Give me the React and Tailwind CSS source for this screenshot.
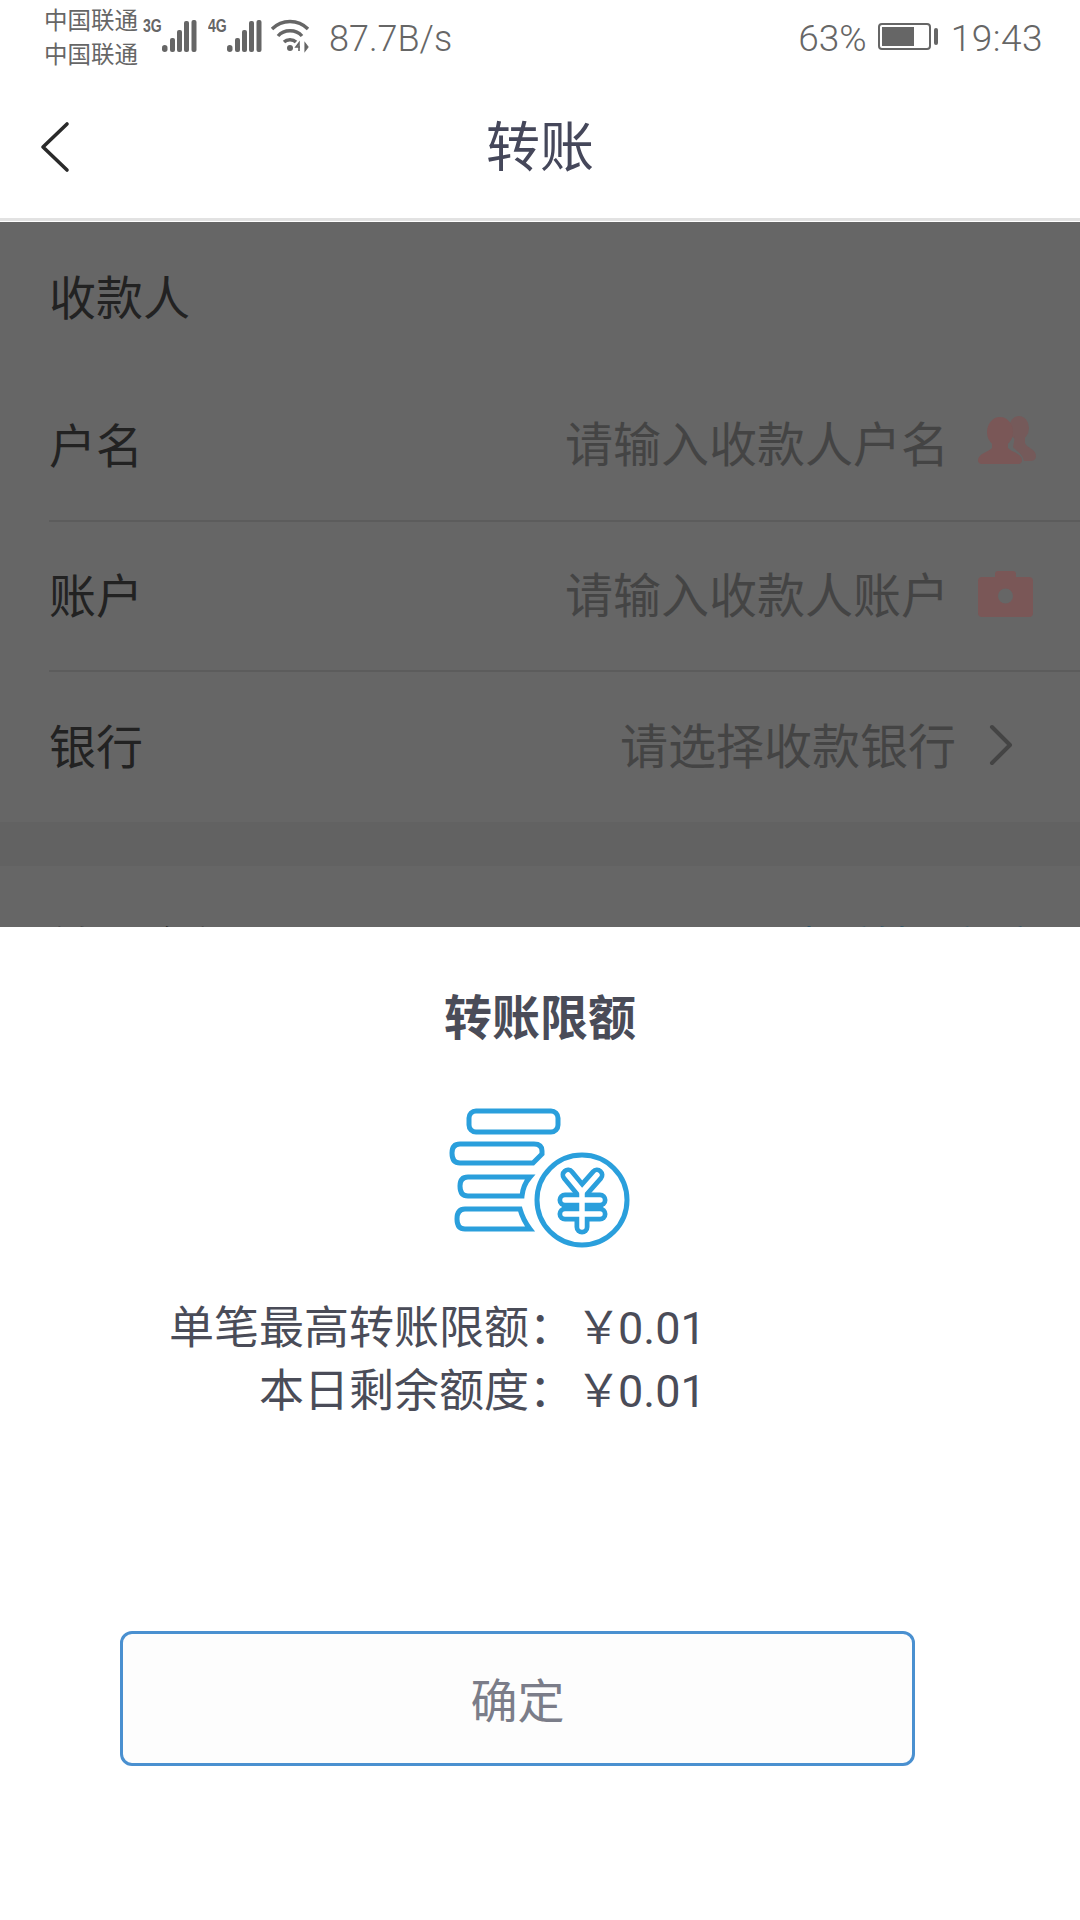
import React from 'react';

const font = { fontFamily: '"Noto Sans CJK SC", sans-serif' };
const digits = { fontFamily: 'Roboto, sans-serif', fontWeight: 300 };
const badge = { fontFamily: '"Liberation Sans", sans-serif' };

function SignalBars() {
    return (
        <svg width="36" height="32" viewBox="0 0 36 32" fill="#666666">
            <rect x="0" y="25" width="5.5" height="7" rx="2.75" />
            <rect x="8" y="18" width="5" height="14" rx="2" />
            <rect x="15" y="10" width="5" height="22" rx="2" />
            <rect x="22" y="1" width="5" height="31" rx="2" />
            <rect x="29.5" y="0" width="5" height="32" rx="2" />
        </svg>
    );
}

function Wifi() {
    return (
        <svg width="40" height="34" viewBox="0 0 40 34" fill="none" stroke="#666666" strokeWidth="3.4">
            <path d="M2 10 C12 0 28 0 38 10" />
            <path d="M8 17 C14 10 26 10 32 17" />
            <path d="M14 23 C17 20 23 20 26 23" />
            <circle cx="20" cy="29" r="3" fill="#666666" stroke="none" />
            <path d="M29 32 V24 L26 28 H30" strokeWidth="1.6" />
            <path d="M35 24 V32 L38 28 Z" strokeWidth="1.2" fill="#666666" />
        </svg>
    );
}

function Coins() {
    const blue = "#2a9fdc";
    return (
        <svg width="220" height="170" viewBox="0 0 220 170" fill="none" stroke={blue} strokeWidth="5">
            <rect x="39" y="21" width="89" height="21" rx="7" />
            <path d="M30 54 H104 Q112 54 112 61 V64 L103 73 H30 Q22 73 22 63 Q22 54 30 54 Z" />
            <path d="M100 87 H38 Q30 87 30 96 Q30 106 38 106 H92 Q93 95 100 87 Z" />
            <path d="M90 119 H35 Q27 119 27 129 Q27 139 35 139 H100 Q93 130 90 119 Z" />
            <circle cx="152" cy="110" r="45" />
            <g strokeLinecap="round" strokeLinejoin="round" strokeWidth="15">
                <path d="M138 85 L152 102 L167 85" />
                <path d="M152 102 V137" />
                <path d="M135 110 H170" />
                <path d="M135 124 H170" />
            </g>
            <g stroke="#ffffff" strokeLinecap="round" strokeLinejoin="round" strokeWidth="5.5">
                <path d="M138 85 L152 102 L167 85" />
                <path d="M152 102 V137" />
                <path d="M135 110 H170" />
                <path d="M135 124 H170" />
            </g>
        </svg>
    );
}

function FormRow({ label, placeholder, icon, border, height = "h-[150px]" }) {
    return (
        <div className={`ml-[49px] ${height} pb-[5px] flex items-center justify-between ${border ? "border-b-2 border-[#5c5c5c]" : ""}`}>
            <span className="text-[47px] text-[#222222]">{label}</span>
            <div className="flex items-center">
                <span className="text-[48px] mt-[-4px] text-[#444444]">{placeholder}</span>
                {icon}
            </div>
        </div>
    );
}

export default function App() {
    return (
        <div className="w-[1080px] h-[1920px] flex flex-col overflow-hidden bg-white" style={font}>
            {/* Status bar */}
            <div className="h-[74px] pl-[44px] pr-[37px] flex items-start justify-between text-[#666666]">
                <div className="flex items-start">
                    <div className="w-[98px] pt-[2px] text-[23.5px] leading-[34px]">
                        <div>中国联通</div>
                        <div>中国联通</div>
                    </div>
                    <span className="w-[19px] mt-[17px] ml-[1px] text-[18px] leading-[18px] font-bold scale-x-[0.78] origin-left whitespace-nowrap" style={badge}>3G</span>
                    <div className="mt-[20px]"><SignalBars /></div>
                    <span className="w-[19px] mt-[17px] ml-[10px] text-[18px] leading-[18px] font-bold scale-x-[0.78] origin-left whitespace-nowrap" style={badge}>4G</span>
                    <div className="mt-[20px]"><SignalBars /></div>
                    <div className="mt-[19px] ml-[7px]"><Wifi /></div>
                    <span className="mt-[17px] ml-[19px] text-[36px] leading-[44px]" style={digits}>87.7B/s</span>
                </div>
                <div className="flex items-start">
                    <span className="mt-[17px] text-[37px] leading-[44px]" style={digits}>63%</span>
                    <div className="mt-[23px] ml-[11px] w-[53px] h-[27px] border-2 border-[#666666] rounded-[4px] p-[2px]">
                        <div className="w-[32px] h-full bg-[#666666]"></div>
                    </div>
                    <div className="mt-[28px] ml-[3px] w-[4px] h-[17px] bg-[#666666] rounded-[2px]"></div>
                    <span className="mt-[17px] ml-[13px] text-[37px] leading-[44px] tracking-[0.5px]" style={digits}>19:43</span>
                </div>
            </div>

            {/* Header */}
            <div className="relative h-[144px] flex items-center justify-center">
                <svg className="absolute left-[38px] top-[46px]" width="34" height="54" viewBox="0 0 34 54" fill="none" stroke="#2a2a2a" strokeWidth="3.6" strokeLinecap="round" strokeLinejoin="round">
                    <path d="M29 4 L5 27 L29 50" />
                </svg>
                <span className="text-[54px] leading-[60px] text-[#45475a] mt-[-4px]">转账</span>
            </div>
            <div className="h-[3px] bg-[#e2e2e2]"></div>
            <div className="h-[1px] bg-white"></div>

            {/* Dimmed form */}
            <div className="h-[705px] overflow-hidden bg-[#666666]">
                <div className="h-[149px] pl-[49px] pb-[3px] flex items-center">
                    <span className="text-[47px] text-[#222222]">收款人</span>
                </div>
                <FormRow
                    label="户名"
                    placeholder="请输入收款人户名"
                    border
                    height="h-[151px]"
                    icon={
                        <svg className="ml-[29px] mr-[44px] mt-[-6px]" width="58" height="48" viewBox="0 0 58 48">
                            <ellipse cx="41" cy="12" rx="10" ry="12" fill="#755a5a" />
                            <path d="M37 20 H47 V27 C49 32 58 33 58 40 C58 44 55 45 52 45 H46 C45 38 38 35 35 31 Z" fill="#755a5a" />
                            <ellipse cx="22" cy="16" rx="13" ry="15" fill="#7a5757" />
                            <path d="M14 26 V32 C10 36 0 38 0 44 Q0 48 4 48 H40 Q44 48 44 44 C44 38 34 36 30 32 V26 Z" fill="#7a5757" />
                        </svg>
                    }
                />
                <FormRow
                    label="账户"
                    placeholder="请输入收款人账户"
                    border
                    icon={
                        <svg className="ml-[29px] mr-[47px]" width="55" height="46" viewBox="0 0 55 46" fill="#7a5757">
                            <path d="M17 6 V3 Q17 0 20 0 H35 Q38 0 38 3 V6 H51 Q55 6 55 10 V42 Q55 46 51 46 H4 Q0 46 0 42 V10 Q0 6 4 6 Z" />
                            <circle cx="27.5" cy="25" r="7.5" fill="#666666" />
                        </svg>
                    }
                />
                <FormRow
                    label="银行"
                    placeholder="请选择收款银行"
                    icon={
                        <svg className="ml-[32px] mr-[66px]" width="26" height="42" viewBox="0 0 26 42" fill="none" stroke="#444444" strokeWidth="4" strokeLinecap="round" strokeLinejoin="round">
                            <path d="M4 3 L22 21 L4 39" />
                        </svg>
                    }
                />
                <div className="h-[44px] bg-[#626262]"></div>
                <div className="h-[150px] pl-[49px] pr-[40px] pt-[10px] flex items-center justify-between">
                    <span className="text-[47px] text-[#222222]">转账金额</span>
                    <span className="text-[42px] mt-[-6px] text-[#1f4f66]">查看转账额度</span>
                </div>
            </div>

            {/* Bottom sheet */}
            <div className="flex-1 bg-white flex flex-col">
                <div className="pt-[57px] text-center text-[48px] leading-[60px] font-bold text-[#4a4c58]">转账限额</div>
                <div className="mt-[46px] flex justify-center"><Coins /></div>
                <div className="mt-[33px] grid grid-cols-[574px_1fr] auto-rows-[63px] text-[45px] leading-[63px] text-[#4a4c58]">
                    <span className="text-right">单笔最高转账限额：</span>
                    <span className="pl-[2px]">￥<span className="ml-[-3px]" style={{ fontFamily: 'Roboto, sans-serif' }}>0.01</span></span>
                    <span className="text-right">本日剩余额度：</span>
                    <span className="pl-[2px]">￥<span className="ml-[-3px]" style={{ fontFamily: 'Roboto, sans-serif' }}>0.01</span></span>
                </div>
                <button className="mt-[212px] ml-[120px] w-[795px] h-[135px] rounded-[12px] border-[3px] border-[#4a90d0] bg-[#fdfdfd] text-[47px] text-[#7b7d89]">
                    确定
                </button>
            </div>
        </div>
    );
}
